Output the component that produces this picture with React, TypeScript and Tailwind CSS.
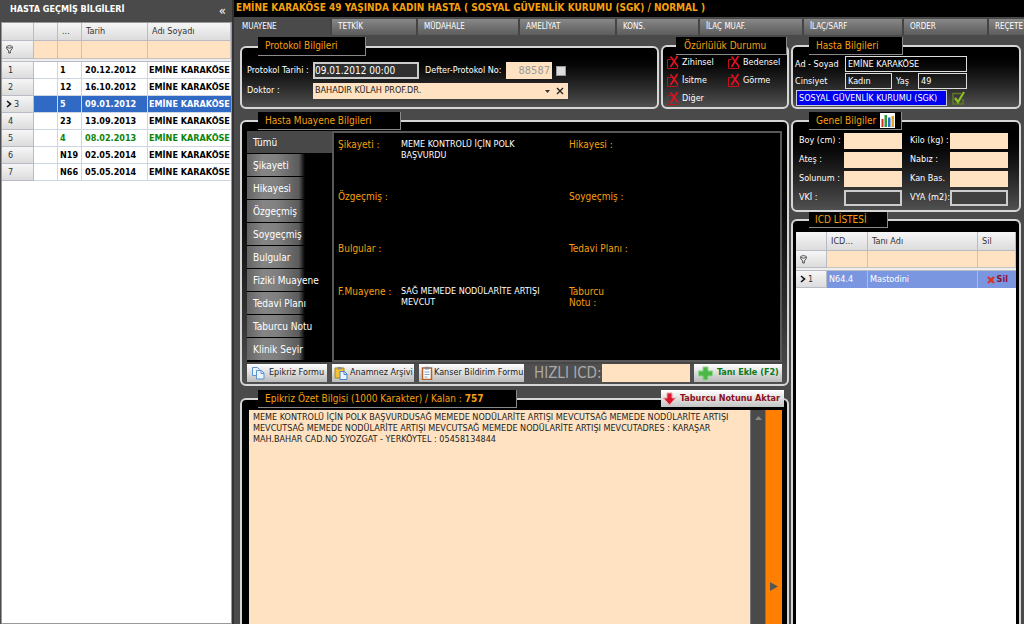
import type { ReactNode } from "react";

const visits = [
  { no: 1, code: "1", date: "20.12.2012", tone: "text-black" },
  { no: 2, code: "12", date: "16.10.2012", tone: "text-black" },
  { no: 3, code: "5", date: "09.01.2012", tone: "bg-[#316ac5] text-white" },
  { no: 4, code: "23", date: "13.09.2013", tone: "text-black" },
  { no: 5, code: "4", date: "08.02.2013", tone: "text-[#0a850a]" },
  { no: 6, code: "N19", date: "02.05.2014", tone: "text-black" },
  { no: 7, code: "N66", date: "05.05.2014", tone: "text-black" },
];

const tabs = [
  { label: "TETKİK", width: "w-[86px]" },
  { label: "MÜDAHALE", width: "w-[102px]" },
  { label: "AMELİYAT", width: "w-[97px]" },
  { label: "KONS.", width: "w-[83px]" },
  { label: "İLAÇ MUAF.", width: "w-[104px]" },
  { label: "İLAÇ/SARF", width: "w-[100px]" },
  { label: "ORDER", width: "w-[85px]" },
  { label: "REÇETE", width: "w-[85px]" },
];

const sections = [
  "Şikayeti",
  "Hikayesi",
  "Özgeçmiş",
  "Soygeçmiş",
  "Bulgular",
  "Fiziki Muayene",
  "Tedavi Planı",
  "Taburcu Notu",
  "Klinik Seyir",
];

const findings = [
  { left: "Şikayeti :", text: "MEME KONTROLÜ İÇİN POLK BAŞVURDU", right: "Hikayesi :", height: "h-[52px]" },
  { left: "Özgeçmiş :", text: "", right: "Soygeçmiş :", height: "h-[52px]" },
  { left: "Bulgular :", text: "", right: "Tedavi Planı :", height: "h-[43px]" },
  { left: "F.Muayene :", text: "SAĞ MEMEDE NODÜLARİTE ARTIŞI MEVCUT", right: "Taburcu Notu :", height: "h-[52px]" },
];

const disabilities = ["Zihinsel", "Bedensel", "İsitme", "Görme", "Diğer"];

const summary =
  "MEME KONTROLÜ İÇİN POLK BAŞVURDUSAĞ MEMEDE NODÜLARİTE ARTIŞI MEVCUTSAĞ MEMEDE NODÜLARİTE ARTIŞI MEVCUTSAĞ MEMEDE NODÜLARİTE ARTIŞI MEVCUTSAĞ MEMEDE NODÜLARİTE ARTIŞI MEVCUTADRES : KARAŞAR MAH.BAHAR CAD.NO 5YOZGAT - YERKÖYTEL : 05458134844";

const headCell = "border-r border-b border-[#b9bcc4] bg-linear-to-b from-[#f6f6f6] to-[#dcdcdc] font-normal text-[#333]";

function Panel({
  title,
  legend,
  className,
  children,
}: {
  title: ReactNode;
  legend: string;
  className: string;
  children: ReactNode;
}) {
  return (
    <fieldset
      className={`relative min-w-0 rounded-md border-2 border-[#d6d6d6] bg-linear-to-b from-black to-[#505050] ${className}`}
    >
      <legend
        className={`border-r border-b border-[#8a8a8a] bg-black text-[10px] leading-none whitespace-nowrap text-[#f5a010] ${legend}`}
      >
        {title}
      </legend>
      {children}
    </fieldset>
  );
}

function FilterIcon() {
  return (
    <svg viewBox="0 0 8 10" className="h-[9px] w-[7px]" fill="none" stroke="#444" strokeWidth="1" aria-hidden="true">
      <ellipse cx="4" cy="2" rx="3.2" ry="1.4" />
      <path d="M.8 2v2L3 6.500v2.500h2V6.500L7.200 4V2" />
    </svg>
  );
}

function RowArrow() {
  return (
    <svg viewBox="0 0 6 8" className="h-2 w-1.5" fill="none" stroke="#111" strokeWidth="1.600" aria-hidden="true">
      <path d="M1 1l3.500 3L1 7" />
    </svg>
  );
}

function CopyIcon() {
  return (
    <svg viewBox="0 0 14 14" className="size-3.5 shrink-0" fill="#eaf3fd" stroke="#5b93cf" aria-hidden="true">
      <path d="M1.500 1.500h5l2 2v6h-7z" />
      <path d="M5.500 4.500h5l2.500 2.500v6H5.500z" />
      <path d="M10 4.500V7.500h3" fill="none" />
    </svg>
  );
}

function PasteIcon() {
  return (
    <svg viewBox="0 0 14 14" className="size-3.5 shrink-0" aria-hidden="true">
      <path d="M1 2h9v10H1z" fill="#f2c230" stroke="#a88420" />
      <path d="M3.500 1h4v2.500h-4z" fill="#8a8f98" />
      <path d="M6 5.500h4.500L13 8v5.500H6z" fill="#eaf3fd" stroke="#4d84c4" />
      <path d="M10 5.500V8.500h3" fill="none" stroke="#4d84c4" />
    </svg>
  );
}

function ClipboardIcon() {
  return (
    <svg viewBox="0 0 14 14" className="size-3.5 shrink-0" aria-hidden="true">
      <path d="M2.500 2h9v11.500h-9z" fill="#fff" stroke="#b5622a" strokeWidth="1.500" />
      <path d="M5 .8h4v2.700H5z" fill="#7d8da5" />
      <path d="M4.500 6h5M4.500 8.500h5M4.500 11h3" stroke="#7aa3d4" />
    </svg>
  );
}

function ChartIcon() {
  return (
    <svg viewBox="0 0 15 15" className="size-[15px]" aria-hidden="true">
      <path d="M0 0h15v15H0z" fill="#fff" />
      <path d="M1.500 6h2v8h-2z" fill="#d22c1c" />
      <path d="M4.500 2h2.500v12H4.500z" fill="#2f9a3a" />
      <path d="M8 4.500h2.500V14H8z" fill="#2d6fc8" />
      <path d="M11.500 3H14v11h-2.500z" fill="#e8a520" />
    </svg>
  );
}

function CrossBox() {
  return (
    <svg viewBox="0 0 14 15" className="h-[15px] w-3.5 shrink-0" fill="none" stroke="#e01020" aria-hidden="true">
      <path d="M5 4.500H1.500v9h10V11" stroke="#c01018" />
      <path d="M4.500 1.500l7.500 10M11.500 1L4.500 12" strokeWidth="1.700" />
    </svg>
  );
}

function VisitHistory() {
  return (
    <aside className="flex w-[232px] shrink-0 flex-col pl-px">
      <div className="flex h-[22px] shrink-0 items-center justify-between pr-1.5 pb-0.5 pl-[9px] text-[9px] font-bold text-white">
        <h2>HASTA GEÇMİŞ BİLGİLERİ</h2>
        <button aria-label="Daralt" className="text-[13px] leading-none font-normal">
          «
        </button>
      </div>
      <div className="min-h-0 flex-1 border border-[#999] bg-white">
        <table className="w-full table-fixed border-separate border-spacing-0 text-left text-[9px] leading-none">
          <colgroup>
            <col className="w-8" />
            <col className="w-6" />
            <col className="w-6" />
            <col className="w-[66px]" />
            <col />
          </colgroup>
          <thead>
            <tr className="h-[18px]">
              <th className={headCell} />
              <th className={headCell} />
              <th className={`${headCell} pl-1`}>...</th>
              <th className={`${headCell} pl-1`}>Tarih</th>
              <th className={`${headCell} pl-1`}>Adı Soyadı</th>
            </tr>
            <tr className="h-[18px]">
              <th className={`${headCell} pl-1`}>
                <FilterIcon />
              </th>
              <th className="border-r border-b border-[#c9c2bc] bg-[#ffe2c1]" />
              <th className="border-r border-b border-[#c9c2bc] bg-[#ffe2c1]" />
              <th className="border-r border-b border-[#c9c2bc] bg-[#ffe2c1]" />
              <th className="border-r border-b border-[#c9c2bc] bg-[#ffe2c1]" />
            </tr>
            <tr className="h-[3px]">
              <td colSpan={5} className="border-b border-[#b9bcc4] bg-[#eee]" />
            </tr>
          </thead>
          <tbody>
            {visits.map((visit) => (
              <tr key={visit.no} className={`h-[17px] font-bold whitespace-nowrap ${visit.tone}`}>
                <th className={headCell}>
                  <span className={`flex items-center gap-0.5 ${visit.no === 3 ? "pl-1" : "pl-1.5"}`}>
                    {visit.no === 3 && <RowArrow />}
                    {visit.no}
                  </span>
                </th>
                <td className="border-r border-b border-[#cdd6e2]" />
                <td className="border-r border-b border-[#cdd6e2] pl-0.5">{visit.code}</td>
                <td className="border-r border-b border-[#cdd6e2] pl-[3px]">{visit.date}</td>
                <td className="border-b border-[#cdd6e2] pl-px">EMİNE KARAKÖSE</td>
              </tr>
            ))}
          </tbody>
        </table>
      </div>
    </aside>
  );
}

function ProtocolPanel() {
  return (
    <Panel title="Protokol Bilgileri" legend="ml-4 flex h-[19px] w-[108px] items-center pl-[7px]" className="flex-1">
      <div className="grid grid-cols-[66px_1fr] items-center gap-y-1 pt-1.5 pl-[5px] text-[9px] text-white">
        <label htmlFor="protocol-date" className="whitespace-nowrap">
          Protokol Tarihi :
        </label>
        <div className="flex items-center">
          <input
            id="protocol-date"
            defaultValue="09.01.2012 00:00"
            className="h-[17px] w-[106px] border-2 border-[#ccc] bg-[#303030] text-[10px]"
          />
          <label htmlFor="protocol-no" className="w-[87px] shrink-0 pl-1.5 whitespace-nowrap">
            Defter-Protokol No:
          </label>
          <input
            id="protocol-no"
            defaultValue="88587"
            className="h-[17px] w-[46px] bg-[#ffe2c1] pr-0.5 text-right text-[11px] text-[#999]"
          />
          <input
            type="checkbox"
            aria-label="Protokol seç"
            className="ml-1 size-2.5 appearance-none border border-[#999] bg-[#ddd]"
          />
        </div>
        <label htmlFor="doctor">Doktor :</label>
        <div className="flex h-4 w-[255px] items-center bg-[#ffe2c1] text-[#222]">
          <select id="doctor" className="min-w-0 flex-1 appearance-none pl-0.5">
            <option>BAHADIR KÜLAH PROF.DR.</option>
          </select>
          <svg viewBox="0 0 5 3" className="mr-1.5 h-[3px] w-[5px]" aria-hidden="true">
            <path d="M0 0h5L2.500 3z" fill="#333" />
          </svg>
          <button aria-label="Temizle" className="mr-1">
            <svg viewBox="0 0 8 8" className="size-2" stroke="#222" strokeWidth="1.400" aria-hidden="true">
              <path d="M1 1l6 6M7 1L1 7" />
            </svg>
          </button>
        </div>
      </div>
    </Panel>
  );
}

function DisabilityPanel() {
  return (
    <Panel
      title="Özürlülük Durumu"
      legend="ml-auto flex h-[18px] w-[111px] items-center pl-2"
      className="w-[128px] shrink-0"
    >
      <div className="grid grid-cols-[61px_1fr] gap-y-[3px] pl-[3px] text-[9px] leading-[15px] text-white">
        {disabilities.map((name) => (
          <button key={name} className="flex items-center gap-0.5 text-left">
            <CrossBox />
            {name}
          </button>
        ))}
      </div>
    </Panel>
  );
}

function ExamPanel() {
  return (
    <Panel
      title="Hasta Muayene Bilgileri"
      legend="ml-4 flex h-[18px] w-[143px] items-center pl-[7px]"
      className="shrink-0 pb-0.5"
    >
      <div className="mx-[5px] flex h-[232px] bg-black pt-px text-white">
        <nav className="flex w-[85px] flex-col gap-px text-[10px]" aria-label="Muayene bölümleri">
          <button className="h-[22px] bg-[#484848] pl-1.5 text-left">Tümü</button>
          {sections.map((name) => (
            <button
              key={name}
              className="h-[22px] bg-[linear-gradient(90deg,#646464_0,#858585_16px,#808080_30px,#5a5a5a_52px,#000_58px)] pl-1.5 text-left whitespace-nowrap"
            >
              {name}
            </button>
          ))}
        </nav>
        <div className="flex-1 border-2 border-[#585858] pt-1.5 pr-2 pl-1 text-[9px] leading-[11px]">
          {findings.map((row) => (
            <div key={row.left} className={`grid grid-cols-[63px_168px_1fr] ${row.height}`}>
              <span className="text-[10px] whitespace-nowrap text-[#f5a010]">{row.left}</span>
              <span className="pr-5">{row.text}</span>
              <span className="w-[50px] text-[10px] text-[#f5a010]">
                <span className={row.right === "Taburcu Notu :" ? "" : "whitespace-nowrap"}>{row.right}</span>
              </span>
            </div>
          ))}
        </div>
      </div>
      <div className="mx-[5px] mt-0.5 flex h-[18px] items-center bg-[#505050] text-[9px] text-[#222]">
        <button className="flex h-full w-20 items-center gap-1 bg-linear-to-b from-white to-[#bbb] pl-1 whitespace-nowrap">
          <CopyIcon />
          Epikriz Formu
        </button>
        <button className="ml-[5px] flex h-full w-[82px] items-center gap-0.5 bg-linear-to-b from-white to-[#bbb] pl-0.5 whitespace-nowrap">
          <PasteIcon />
          Anamnez Arşivi
        </button>
        <button className="ml-[5px] flex h-full w-[105px] shrink-0 items-center bg-linear-to-b from-white to-[#bbb] pl-px whitespace-nowrap">
          <ClipboardIcon />
          Kanser Bildirim Formu
        </button>
        <label htmlFor="quick-icd" className="ml-2.5 text-[15px] whitespace-nowrap text-[#aaa]">
          HIZLI ICD:
        </label>
        <input id="quick-icd" className="ml-auto h-full w-[88px] bg-[#ffe2c1] px-1" />
        <button className="ml-1 flex h-full w-[88px] shrink-0 items-center gap-1 bg-linear-to-b from-white to-[#bbb] pl-1 font-bold whitespace-nowrap text-[#0c7a14]">
          <svg viewBox="0 0 15 15" className="size-[15px] shrink-0" aria-hidden="true">
            <path d="M5 1h5v4h4.500v5H10v4H5v-4H.5V5H5z" fill="#4cb848" stroke="#8fd58a" />
          </svg>
          Tanı Ekle (F2)
        </button>
      </div>
    </Panel>
  );
}

function SummaryPanel() {
  return (
    <div className="relative flex min-h-0 flex-1 flex-col">
      <Panel
        title={
          <label htmlFor="summary">
            Epikriz Özet Bilgisi (1000 Karakter) / Kalan : <b>757</b>
          </label>
        }
        legend="ml-4 flex h-[18px] w-[259px] items-center pl-[7px]"
        className="min-h-0 flex-1 rounded-b-none border-b-0 to-black"
      >
        <div className="mt-0.5 mr-[5px] ml-[7px] flex h-full">
          <textarea
            id="summary"
            defaultValue={summary}
            className="h-full min-w-0 flex-1 resize-none overflow-hidden bg-[#ffe2c1] pt-0.5 pr-3 pl-1 text-[9px] leading-[11px] text-[#222]"
          />
          <div className="flex w-4 justify-center border-r border-l border-[#777] bg-[#4a4a4a] pt-1.5">
            <svg viewBox="0 0 7 4" className="h-1 w-[7px]" aria-hidden="true">
              <path d="M0 4h7L3.500 0z" fill="#888" />
            </svg>
          </div>
          <button aria-label="Paneli aç" className="flex w-4 items-start justify-center bg-[#ff8000] pt-[172px]">
            <svg viewBox="0 0 8 9" className="h-[9px] w-2" aria-hidden="true">
              <path d="M0 0v9l8-4.500z" fill="#555" />
            </svg>
          </button>
        </div>
      </Panel>
      <button className="absolute top-0 right-[5px] flex h-[17px] w-[123px] items-center gap-1 bg-linear-to-b from-white to-[#c4c4c4] pl-0.5 text-[9px] font-bold whitespace-nowrap text-[#8c1020]">
        <svg viewBox="0 0 13 14" className="h-3.5 w-[13px] shrink-0" aria-hidden="true">
          <path d="M4 1h5v5h3.500L6.500 13 .5 6H4z" fill="#d8182c" stroke="#f0a0a8" />
        </svg>
        Taburcu Notunu Aktar
      </button>
    </div>
  );
}

function PatientPanel() {
  return (
    <Panel title="Hasta Bilgileri" legend="ml-4 flex h-[18px] w-[94px] items-center pl-[7px]" className="h-[72px] shrink-0">
      <div className="grid grid-cols-[50px_47px_26px_49px] items-center gap-y-px pt-px pl-0.5 text-[9px] leading-none text-white">
        <label htmlFor="full-name" className="whitespace-nowrap">
          Ad - Soyad
        </label>
        <input
          id="full-name"
          defaultValue="EMİNE KARAKÖSE"
          className="col-span-3 h-4 w-full min-w-0 border border-[#ddd] pl-0.5"
        />
        <label htmlFor="sex">Cinsiyet</label>
        <input id="sex" defaultValue="Kadın" className="h-4 w-full min-w-0 border border-[#ddd] pl-0.5" />
        <label htmlFor="age" className="pl-1">
          Yaş
        </label>
        <input id="age" defaultValue="49" className="h-4 w-full min-w-0 border border-[#ddd] pl-0.5" />
      </div>
      <div className="flex items-center gap-1 pt-px pl-[3px]">
        <input
          aria-label="Kurum"
          defaultValue="SOSYAL GÜVENLİK KURUMU (SGK)"
          className="h-4 w-[151px] border border-[#ccc] bg-[#0000f0] pl-0.5 text-[9px] text-white"
        />
        <svg viewBox="0 0 15 16" className="h-4 w-[15px]" fill="none" aria-hidden="true">
          <path d="M10 3.500H2v10.500h10V9" stroke="#5f7a20" strokeWidth="1.500" />
          <path d="M4 8l3 4 6-10" stroke="#8cc020" strokeWidth="2.200" />
        </svg>
      </div>
    </Panel>
  );
}

const measures = [
  { id: "height", label: "Boy (cm) :", box: "bg-[#ffe2c1]" },
  { id: "weight", label: "Kilo (kg) :", box: "bg-[#ffe2c1]" },
  { id: "fever", label: "Ateş :", box: "bg-[#ffe2c1]" },
  { id: "pulse", label: "Nabız :", box: "bg-[#ffe2c1]" },
  { id: "respiration", label: "Solunum :", box: "bg-[#ffe2c1]" },
  { id: "pressure", label: "Kan Bas.", box: "bg-[#ffe2c1]" },
  { id: "bmi", label: "VKİ :", box: "border-2 border-[#ccc] bg-[#404040]" },
  { id: "bsa", label: "VYA (m2):", box: "border-2 border-[#ccc] bg-[#404040]" },
];

function VitalsPanel() {
  return (
    <Panel
      title={
        <>
          Genel Bilgiler
          <ChartIcon />
        </>
      }
      legend="ml-4 flex h-[18px] w-[93px] items-center gap-1 pl-[7px]"
      className="shrink-0"
    >
      <div className="grid grid-cols-[103px_98px] gap-x-2 gap-y-[3px] pt-[3px] pb-1 pl-1.5 text-[9px] text-white">
        {measures.map((item) => (
          <div key={item.id} className="flex items-center justify-between">
            <label htmlFor={item.id} className="whitespace-nowrap">
              {item.label}
            </label>
            <input id={item.id} className={`h-4 w-[58px] shrink-0 px-1 ${item.box}`} />
          </div>
        ))}
      </div>
    </Panel>
  );
}

function IcdPanel() {
  return (
    <Panel
      title="ICD LİSTESİ"
      legend="ml-4 flex h-4 w-[79px] items-center pl-1.5"
      className="min-h-0 flex-1 rounded-b-none border-b-0 to-black"
    >
      <div className="mx-[3px] mt-1 h-full bg-white">
        <table className="w-full table-fixed border-separate border-spacing-0 text-left text-[9px] leading-none">
          <colgroup>
            <col className="w-[31px]" />
            <col className="w-[41px]" />
            <col />
            <col className="w-[38px]" />
          </colgroup>
          <thead>
            <tr className="h-[19px]">
              <th className={headCell} />
              <th className={`${headCell} pl-1`}>ICD...</th>
              <th className={`${headCell} pl-1`}>Tanı Adı</th>
              <th className={`${headCell} pl-1`}>Sil</th>
            </tr>
            <tr className="h-[17px]">
              <th className={`${headCell} pl-1`}>
                <FilterIcon />
              </th>
              <th className="border-r border-b border-[#c9c2bc] bg-[#ffe2c1]" />
              <th className="border-r border-b border-[#c9c2bc] bg-[#ffe2c1]" />
              <th className="border-r border-b border-[#c9c2bc] bg-[#ffe2c1]" />
            </tr>
            <tr className="h-[3px]">
              <td colSpan={4} className="border-b border-[#b9bcc4] bg-[#eee]" />
            </tr>
          </thead>
          <tbody>
            <tr className="h-[17px] bg-[#7b96e0] text-white">
              <th className={headCell}>
                <span className="flex items-center gap-0.5 pl-1">
                  <RowArrow />1
                </span>
              </th>
              <td className="border-r border-[#a9bbee] pl-0.5">N64.4</td>
              <td className="border-r border-[#a9bbee] pl-0.5">Mastodini</td>
              <td>
                <button className="ml-auto flex items-center gap-0.5 pr-2 font-bold text-[#8c1030]">
                  <svg viewBox="0 0 8 8" className="size-2" stroke="#e03020" strokeWidth="2.200" aria-hidden="true">
                    <path d="M1 1l6 6M7 1L1 7" />
                  </svg>
                  Sil
                </button>
              </td>
            </tr>
          </tbody>
        </table>
      </div>
    </Panel>
  );
}

export default function App() {
  return (
    <div className="flex h-screen overflow-hidden bg-[#4a4a4a] font-['DejaVu_Sans_Condensed','DejaVu_Sans',sans-serif]">
      <VisitHistory />
      <main className="flex min-w-0 flex-1 flex-col border-l-2 border-[#333]">
        <h1 className="h-[17px] shrink-0 bg-black pl-0.5 text-[10px] leading-4 font-bold whitespace-nowrap text-[#f5a010]">
          EMİNE KARAKÖSE 49 YAŞINDA KADIN HASTA ( SOSYAL GÜVENLİK KURUMU (SGK) / NORMAL )
        </h1>
        <nav className="mt-0.5 flex h-4 shrink-0 overflow-hidden text-[8px] text-white" aria-label="Sekmeler">
          <button className="w-24 shrink-0 pl-2 text-left">MUAYENE</button>
          {tabs.map((tab) => (
            <button
              key={tab.label}
              className={`shrink-0 border-l-2 border-[#444] bg-linear-to-b from-[#888] to-[#5c5c5c] pl-1.5 text-left ${tab.width}`}
            >
              {tab.label}
            </button>
          ))}
        </nav>
        <div className="flex min-h-0 flex-1 gap-0.5 pt-0.5 pr-[3px] pl-1.5">
          <div className="flex min-w-0 flex-1 flex-col">
            <div className="flex h-[72px] shrink-0 gap-0.5">
              <ProtocolPanel />
              <DisabilityPanel />
            </div>
            <div className="mt-[3px] flex flex-col">
              <ExamPanel />
            </div>
            <div className="mt-1 flex min-h-0 flex-1 flex-col">
              <SummaryPanel />
            </div>
          </div>
          <div className="flex w-[230px] shrink-0 flex-col">
            <PatientPanel />
            <div className="mt-[3px] flex flex-col">
              <VitalsPanel />
            </div>
            <IcdPanel />
          </div>
        </div>
      </main>
    </div>
  );
}
